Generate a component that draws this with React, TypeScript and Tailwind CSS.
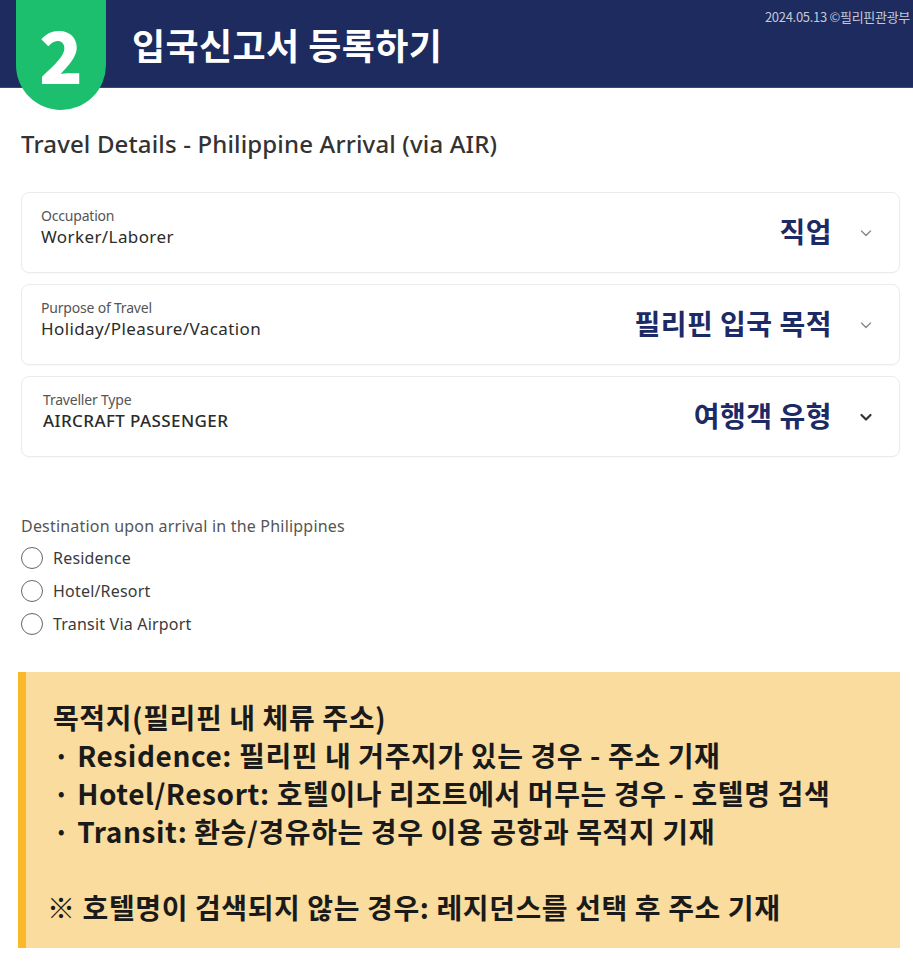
const kr = { fontFamily: '"Noto Sans CJK KR", "Noto Sans", sans-serif' }
const en = { fontFamily: '"Noto Sans", "Noto Sans CJK KR", sans-serif' }

function Chevron({ bold }: { bold?: boolean }) {
  return (
    <svg width="14" height="14" viewBox="0 0 14 14" fill="none" className="ml-[27px] mr-[26px]">
      <path
        d="M2.5 5 L7 9.5 L11.5 5"
        stroke={bold ? '#333' : '#888'}
        strokeWidth={bold ? 2.2 : 1.4}
        strokeLinecap="round"
        strokeLinejoin="round"
      />
    </svg>
  )
}

function SelectCard({ label, value, kor, bold, indent }: { label: string; value: string; kor: string; bold?: boolean; indent?: boolean }) {
  return (
    <div className="h-[81px] rounded-lg border border-[#ebebeb] flex items-center shadow-[0_1px_2px_rgba(0,0,0,0.03)]">
      <div className={`flex-1 ${indent ? 'pl-[21px]' : 'pl-[19px]'} -mt-[10px]`} style={en}>
        <div className="text-[14px] leading-[18px] text-[#555] tracking-[-0.2px]">{label}</div>
        <div className={`text-[17px] leading-[24px] text-[#2b2b2b] tracking-[0.4px] ${bold ? 'font-medium' : ''}`}>{value}</div>
      </div>
      <div className="text-[28px] font-bold text-[#1c2a66] tracking-[0.5px] -mt-[4px]" style={kr}>{kor}</div>
      <Chevron bold={bold} />
    </div>
  )
}

function Radio({ label }: { label: string }) {
  return (
    <div className="flex items-center h-[33px]">
      <div className="w-[22px] h-[22px] rounded-full border-[1.5px] border-[#666]" />
      <span className="ml-[10px] text-[16px] tracking-[0.2px] text-[#3a3a3a]" style={en}>{label}</span>
    </div>
  )
}

export default function App() {
  return (
    <div className="w-[913px] min-h-[964px] bg-white relative overflow-hidden">
      {/* Header */}
      <header className="h-[88px] bg-[#1d2b5e] border-b border-[#3a4676] flex items-center relative">
        <div className="absolute left-[16px] top-0 w-[90px] h-[110px] bg-[#1bbf6e] rounded-b-[45px] flex justify-center">
          <span className="text-white font-black text-[72px] leading-[90px] mt-[8px]" style={kr}>2</span>
        </div>
        <h1 className="ml-[132px] mt-[1px] text-white text-[36px] font-bold tracking-[0.4px]" style={kr}>입국신고서 등록하기</h1>
        <div className="absolute right-[3px] top-[7px] text-[13px] text-[#c3c8d6] tracking-[-0.3px]" style={kr}>2024.05.13 ©필리핀관광부</div>
      </header>

      <main className="px-[21px] pr-[13px]">
        <h2 className="mt-[40px] text-[24px] leading-[32px] text-[#333] font-medium tracking-[0.15px]" style={en}>
          Travel Details - Philippine Arrival (via AIR)
        </h2>

        <div className="mt-[32px] flex flex-col gap-[11px]">
          <SelectCard label="Occupation" value="Worker/Laborer" kor="직업" />
          <SelectCard label="Purpose of Travel" value="Holiday/Pleasure/Vacation" kor="필리핀 입국 목적" />
          <SelectCard label="Traveller Type" value="AIRCRAFT PASSENGER" kor="여행객 유형" bold indent />
        </div>

        <div className="mt-[58px] text-[16px] leading-[22px] tracking-[0.2px] text-[#555]" style={en}>Destination upon arrival in the Philippines</div>
        <div className="mt-[4px] flex flex-col">
          <Radio label="Residence" />
          <Radio label="Hotel/Resort" />
          <Radio label="Transit Via Airport" />
        </div>
      </main>

      {/* Note box */}
      <div className="ml-[18px] mr-[13px] mt-[32px] bg-[#f9dc9e] border-l-[8px] border-[#fbb829] pt-[26px] pb-[22px] pl-[27px]" style={kr}>
        <div className="text-[28px] leading-[38px] font-bold text-[#1a1a1a] tracking-[0.6px]">
          <div>목적지(필리핀 내 체류 주소)</div>
          <div>· Residence: 필리핀 내 거주지가 있는 경우 - 주소 기재</div>
          <div>· Hotel/Resort: 호텔이나 리조트에서 머무는 경우 - 호텔명 검색</div>
          <div>· Transit: 환승/경유하는 경우 이용 공항과 목적지 기재</div>
          <div className="h-[38px]" />
          <div className="-ml-[6px]">※ 호텔명이 검색되지 않는 경우: 레지던스를 선택 후 주소 기재</div>
        </div>
      </div>
    </div>
  )
}
